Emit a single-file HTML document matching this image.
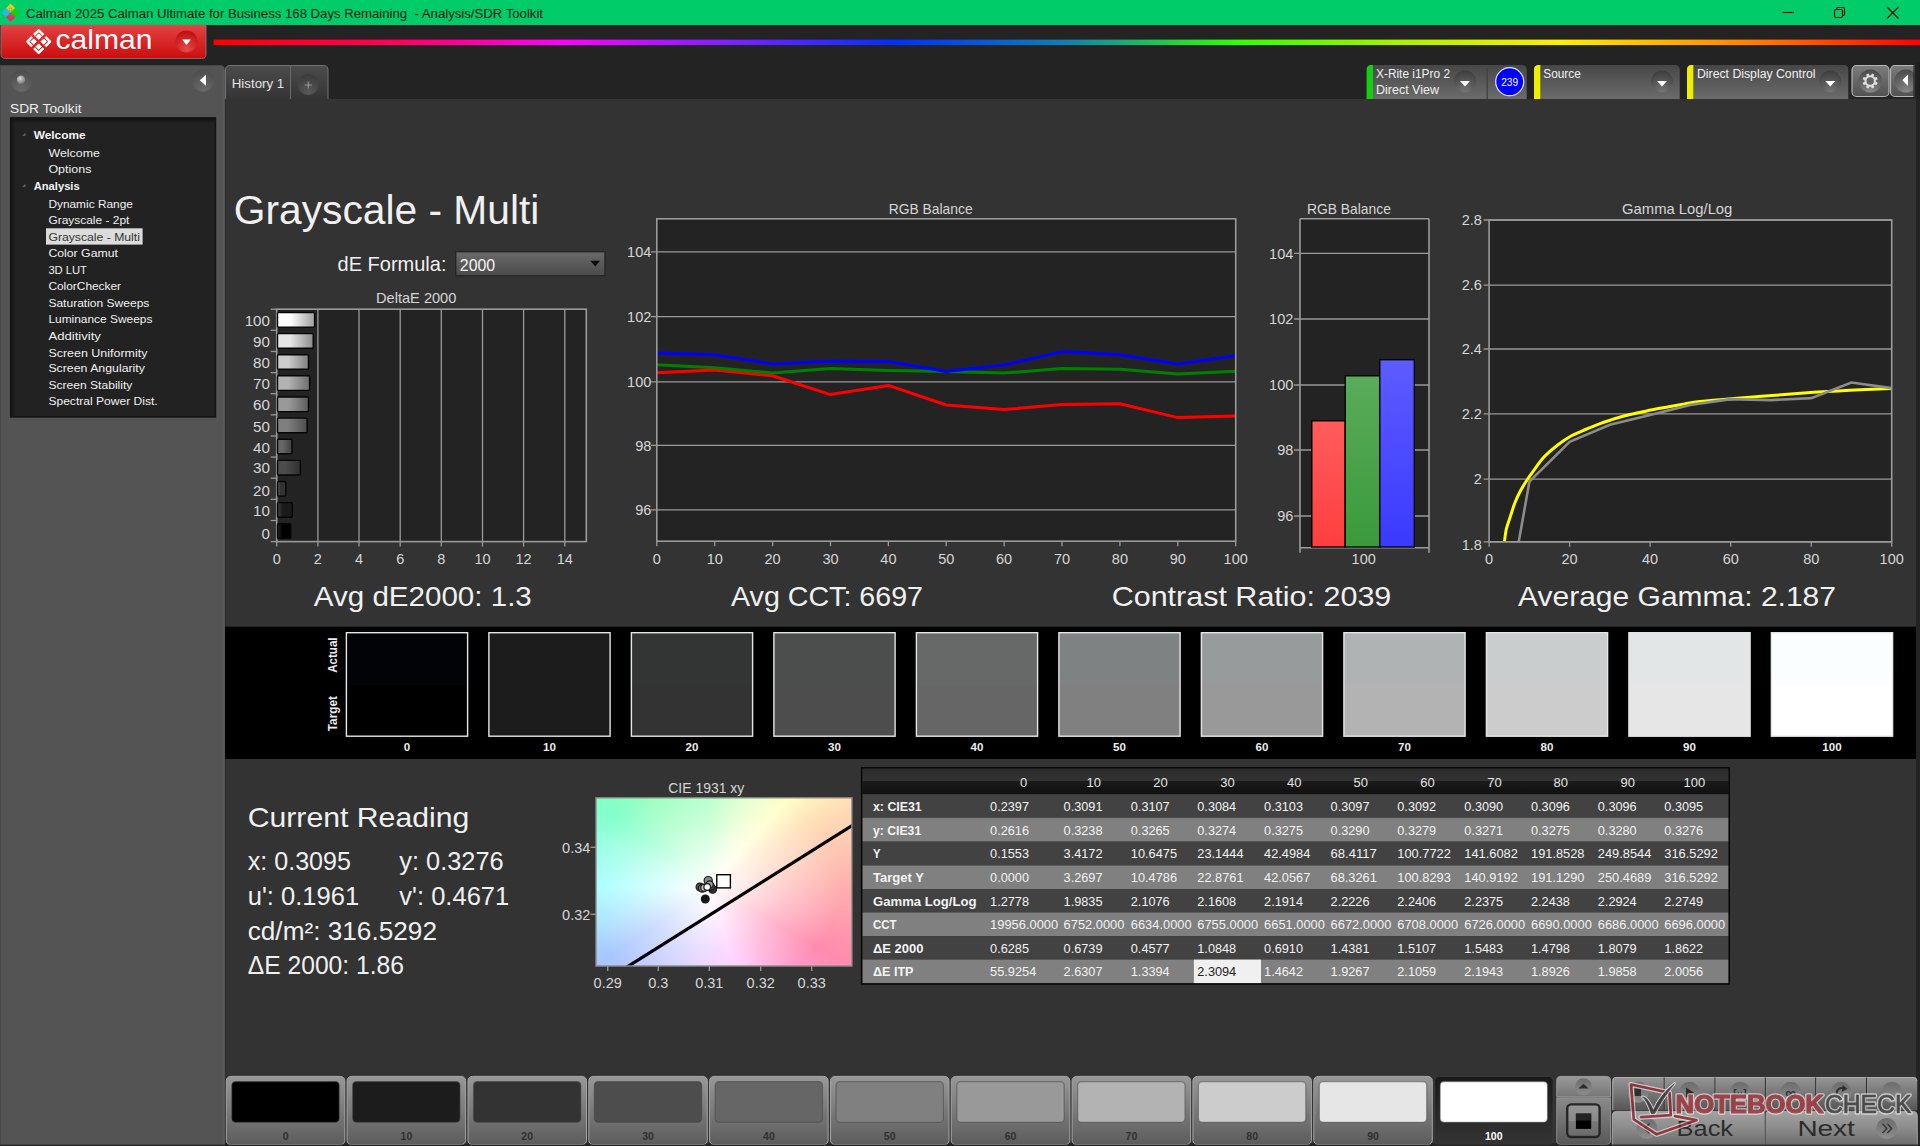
<!DOCTYPE html>
<html lang="en"><head><meta charset="utf-8"><title>Calman 2025 - Analysis/SDR Toolkit</title>
<style>
html,body{margin:0;padding:0;background:#333;width:1920px;height:1146px;overflow:hidden;font-family:"Liberation Sans",sans-serif}
#cie{position:absolute;left:596.0px;top:797.8px;width:255.9px;height:168.2px;background:radial-gradient(ellipse 52% 62% at 44% 53%, rgba(255,255,255,1) 0%, rgba(255,255,255,0.8) 22%, rgba(255,255,255,0.42) 60%, rgba(255,255,255,0.08) 100%),conic-gradient(from 0deg at 44% 53%, #a8ffc0 0deg, #e4ffc8 25deg, #ffffc4 42deg, #ffdcb0 58deg, #ffa8a8 90deg, #ff80a8 119deg, #ff98cc 137deg, #ffc0ff 161deg, #dcc8ff 188deg, #a0c0ff 235deg, #98ffff 270deg, #78ffc4 308deg, #90ffb8 328deg, #a8ffc0 360deg);}
svg text{white-space:pre}
</style></head><body>
<svg width="1920" height="1146" viewBox="0 0 1920 1146" font-family="'Liberation Sans', sans-serif" style="position:absolute;left:0;top:0"><defs><linearGradient id="gRed" x1="0" y1="0" x2="0" y2="1"><stop offset="0" stop-color="#e24444"/><stop offset="0.5" stop-color="#d82626"/><stop offset="1" stop-color="#c90f0f"/></linearGradient><radialGradient id="gRedBtn" cx="0.5" cy="0.85" r="0.8"><stop offset="0" stop-color="#e84a4a"/><stop offset="1" stop-color="#c01010"/></radialGradient><linearGradient id="gRain" x1="0" y1="0" x2="1" y2="0"><stop offset="0" stop-color="#ff0000"/><stop offset="0.11" stop-color="#ff0060"/><stop offset="0.205" stop-color="#ff00ff"/><stop offset="0.3" stop-color="#8020ff"/><stop offset="0.4" stop-color="#0030ff"/><stop offset="0.5" stop-color="#1080b0"/><stop offset="0.6" stop-color="#30ff00"/><stop offset="0.7" stop-color="#b0f000"/><stop offset="0.79" stop-color="#ffee00"/><stop offset="0.9" stop-color="#ff8000"/><stop offset="1" stop-color="#ff0000"/></linearGradient><linearGradient id="gTab" x1="0" y1="0" x2="0" y2="1"><stop offset="0" stop-color="#4c4c4c"/><stop offset="1" stop-color="#343434"/></linearGradient><radialGradient id="gDk" cx="0.5" cy="0.9" r="0.9"><stop offset="0" stop-color="#5a5a5a"/><stop offset="1" stop-color="#3a3a3a"/></radialGradient><linearGradient id="gPanel" x1="0" y1="0" x2="0" y2="1"><stop offset="0" stop-color="#474747"/><stop offset="1" stop-color="#6b6b6b"/></linearGradient><radialGradient id="gDrop" cx="0.5" cy="1.0" r="1.0"><stop offset="0" stop-color="#777"/><stop offset="1" stop-color="#3c3c3c"/></radialGradient><linearGradient id="gBtn" x1="0" y1="0" x2="0" y2="1"><stop offset="0" stop-color="#7c7c7c"/><stop offset="1" stop-color="#525252"/></linearGradient><radialGradient id="gDrop2" cx="0.5" cy="1.0" r="1.0"><stop offset="0" stop-color="#8a8a8a"/><stop offset="1" stop-color="#4a4a4a"/></radialGradient><linearGradient id="gEdge" x1="0" y1="0" x2="1" y2="0"><stop offset="0" stop-color="#232323"/><stop offset="1" stop-color="#1c1c1c"/></linearGradient><radialGradient id="gLp" cx="0.5" cy="0.9" r="0.9"><stop offset="0" stop-color="#6a6a6a"/><stop offset="1" stop-color="#4c4c4c"/></radialGradient><radialGradient id="gBall" cx="0.4" cy="0.35" r="0.7"><stop offset="0" stop-color="#d8d8d8"/><stop offset="1" stop-color="#707070"/></radialGradient><linearGradient id="gInS" x1="0" y1="0" x2="0" y2="1"><stop offset="0" stop-color="#0e0e0e"/><stop offset="1" stop-color="#222222"/></linearGradient><linearGradient id="gInS2" x1="0" y1="0" x2="1" y2="0"><stop offset="0" stop-color="#0e0e0e"/><stop offset="1" stop-color="#222222"/></linearGradient><linearGradient id="gSel" x1="0" y1="0" x2="0" y2="1"><stop offset="0" stop-color="#6a6a6a"/><stop offset="1" stop-color="#4a4a4a"/></linearGradient><linearGradient id="gB0" x1="0" y1="0" x2="1" y2="0"><stop offset="0" stop-color="rgb(38,38,38)"/><stop offset="0.35" stop-color="rgb(0,0,0)"/><stop offset="1" stop-color="rgb(0,0,0)"/></linearGradient><linearGradient id="gB10" x1="0" y1="0" x2="1" y2="0"><stop offset="0" stop-color="rgb(64,64,64)"/><stop offset="0.35" stop-color="rgb(26,26,26)"/><stop offset="1" stop-color="rgb(26,26,26)"/></linearGradient><linearGradient id="gB20" x1="0" y1="0" x2="1" y2="0"><stop offset="0" stop-color="rgb(89,89,89)"/><stop offset="0.35" stop-color="rgb(51,51,51)"/><stop offset="1" stop-color="rgb(51,51,51)"/></linearGradient><linearGradient id="gB30" x1="0" y1="0" x2="1" y2="0"><stop offset="0" stop-color="rgb(76,76,76)"/><stop offset="0.35" stop-color="rgb(76,76,76)"/><stop offset="1" stop-color="rgb(47,47,47)"/></linearGradient><linearGradient id="gB40" x1="0" y1="0" x2="1" y2="0"><stop offset="0" stop-color="rgb(102,102,102)"/><stop offset="0.35" stop-color="rgb(102,102,102)"/><stop offset="1" stop-color="rgb(63,63,63)"/></linearGradient><linearGradient id="gB50" x1="0" y1="0" x2="1" y2="0"><stop offset="0" stop-color="rgb(127,127,127)"/><stop offset="0.35" stop-color="rgb(127,127,127)"/><stop offset="1" stop-color="rgb(78,78,78)"/></linearGradient><linearGradient id="gB60" x1="0" y1="0" x2="1" y2="0"><stop offset="0" stop-color="rgb(153,153,153)"/><stop offset="0.35" stop-color="rgb(153,153,153)"/><stop offset="1" stop-color="rgb(94,94,94)"/></linearGradient><linearGradient id="gB70" x1="0" y1="0" x2="1" y2="0"><stop offset="0" stop-color="rgb(178,178,178)"/><stop offset="0.35" stop-color="rgb(178,178,178)"/><stop offset="1" stop-color="rgb(110,110,110)"/></linearGradient><linearGradient id="gB80" x1="0" y1="0" x2="1" y2="0"><stop offset="0" stop-color="rgb(204,204,204)"/><stop offset="0.35" stop-color="rgb(204,204,204)"/><stop offset="1" stop-color="rgb(126,126,126)"/></linearGradient><linearGradient id="gB90" x1="0" y1="0" x2="1" y2="0"><stop offset="0" stop-color="rgb(229,229,229)"/><stop offset="0.35" stop-color="rgb(229,229,229)"/><stop offset="1" stop-color="rgb(141,141,141)"/></linearGradient><linearGradient id="gB100" x1="0" y1="0" x2="1" y2="0"><stop offset="0" stop-color="rgb(255,255,255)"/><stop offset="0.35" stop-color="rgb(255,255,255)"/><stop offset="1" stop-color="rgb(158,158,158)"/></linearGradient><linearGradient id="gbR" x1="0" y1="0" x2="0" y2="1"><stop offset="0" stop-color="#ff5c5c"/><stop offset="1" stop-color="#ff3e3e"/></linearGradient><linearGradient id="gbG" x1="0" y1="0" x2="0" y2="1"><stop offset="0" stop-color="#5aac5a"/><stop offset="1" stop-color="#3a9a3a"/></linearGradient><linearGradient id="gbB" x1="0" y1="0" x2="0" y2="1"><stop offset="0" stop-color="#5c5cff"/><stop offset="1" stop-color="#3a3aff"/></linearGradient><linearGradient id="gHdr" x1="0" y1="0" x2="0" y2="1"><stop offset="0" stop-color="#2c2c2c"/><stop offset="0.47" stop-color="#323232"/><stop offset="0.5" stop-color="#1b1b1b"/><stop offset="1" stop-color="#101010"/></linearGradient><linearGradient id="gBb" x1="0" y1="0" x2="0" y2="1"><stop offset="0" stop-color="#989898"/><stop offset="0.5" stop-color="#7a7a7a"/><stop offset="1" stop-color="#5c5c5c"/></linearGradient><linearGradient id="gBbSel" x1="0" y1="0" x2="0" y2="1"><stop offset="0" stop-color="#1a1a1a"/><stop offset="1" stop-color="#343434"/></linearGradient><linearGradient id="gSm" x1="0" y1="0" x2="0" y2="1"><stop offset="0" stop-color="#9a9a9a"/><stop offset="1" stop-color="#767676"/></linearGradient><linearGradient id="gSm2" x1="0" y1="0" x2="0" y2="1"><stop offset="0" stop-color="#8a8a8a"/><stop offset="1" stop-color="#585858"/></linearGradient><linearGradient id="gStop" x1="0" y1="0" x2="0" y2="1"><stop offset="0" stop-color="#969696"/><stop offset="0.5" stop-color="#8a8a8a"/><stop offset="0.52" stop-color="#7a7a7a"/><stop offset="1" stop-color="#6a6a6a"/></linearGradient><linearGradient id="gRb" x1="0" y1="0" x2="0" y2="1"><stop offset="0" stop-color="#969696"/><stop offset="1" stop-color="#565656"/></linearGradient><linearGradient id="gCirc" x1="0" y1="0" x2="0" y2="1"><stop offset="0" stop-color="#6c6c6c"/><stop offset="1" stop-color="#8e8e8e"/></linearGradient><linearGradient id="gRb2" x1="0" y1="0" x2="0" y2="1"><stop offset="0" stop-color="#a2a2a2"/><stop offset="0.5" stop-color="#8a8a8a"/><stop offset="1" stop-color="#686868"/></linearGradient><filter id="fGlow" x="-5%" y="-20%" width="110%" height="150%"><feGaussianBlur stdDeviation="0.7"/></filter></defs>
<rect x="0.00" y="0.00" width="1920.00" height="1146.00" fill="#333333"/>
<rect x="0.00" y="25.00" width="1920.00" height="74.00" fill="#232323"/>
<rect x="1916.00" y="99.00" width="4.00" height="1047.00" fill="#232323"/>
<rect x="0.00" y="0.00" width="1920.00" height="25.00" fill="#00cc6a"/>
<path d="M10.6 3.5999999999999996L15.2 8.2L10.6 12.799999999999999L6.0 8.2Z" fill="#f6c915"/>
<path d="M6.1 8.1L10.7 12.7L6.1 17.299999999999997L1.5 12.7Z" fill="#2db4f0"/>
<path d="M15.1 8.1L19.7 12.7L15.1 17.299999999999997L10.5 12.7Z" fill="#10d010"/>
<path d="M10.6 12.6L15.2 17.2L10.6 21.799999999999997L6.0 17.2Z" fill="#f02860"/>
<circle cx="10.6" cy="9.4" r="1.5" fill="#f6c915" stroke="#00cc6a" stroke-width="0.7"/>
<circle cx="10.6" cy="15.6" r="1.5" fill="#f02860" stroke="#00cc6a" stroke-width="0.5"/>
<text x="26.0" y="18.3" font-size="13.6" fill="#0b1a10" textLength="517.0" lengthAdjust="spacingAndGlyphs">Calman 2025 Calman Ultimate for Business 168 Days Remaining  - Analysis/SDR Toolkit</text>
<g stroke="#111" stroke-width="1.1" fill="none"><path d="M1782.5 12.5H1794"/><rect x="1834.5" y="9.5" width="8" height="8" rx="1.5"/><path d="M1836.5 9.5V8.5Q1836.5 7.5 1838 7.5H1843Q1844.5 7.5 1844.5 9V14Q1844.5 15.5 1843 15.5"/><path d="M1887 7L1898.5 18.5M1898.5 7L1887 18.5"/></g>
<path d="M1 25H206V54Q206 58.5 201.5 58.5H5.5Q1 58.5 1 54Z" fill="url(#gRed)" stroke="#8a7070" stroke-width="0.9"/>
<g transform="translate(38.7,41.6)" fill="none" stroke="#fff" stroke-width="2.5" stroke-linecap="butt" stroke-linejoin="round"><path d="M-4.7 -6.6L0 -11.3L4.7 -6.6"/><path d="M-4.7 6.6L0 11.3L4.7 6.6"/><path d="M-6.6 -4.7L-11.3 0L-6.6 4.7"/><path d="M6.6 -4.7L11.3 0L6.6 4.7"/></g>
<path d="M38.7 33.9L41.400000000000006 36.6L38.7 39.300000000000004L36.0 36.6Z" fill="#fff" stroke="#fff" stroke-width="1" stroke-linejoin="round"/>
<path d="M38.7 43.9L41.400000000000006 46.6L38.7 49.300000000000004L36.0 46.6Z" fill="#fff" stroke="#fff" stroke-width="1" stroke-linejoin="round"/>
<path d="M33.7 38.9L36.400000000000006 41.6L33.7 44.300000000000004L31.000000000000004 41.6Z" fill="#fff" stroke="#fff" stroke-width="1" stroke-linejoin="round"/>
<path d="M43.7 38.9L46.400000000000006 41.6L43.7 44.300000000000004L41.0 41.6Z" fill="#fff" stroke="#fff" stroke-width="1" stroke-linejoin="round"/>
<text x="55.5" y="48.5" font-size="28" fill="#ffffff" textLength="97.0" lengthAdjust="spacingAndGlyphs">calman</text>
<circle cx="186.5" cy="41.5" r="11" fill="url(#gRedBtn)"/>
<path d="M182 39.5H191L186.5 45Z" fill="#fff"/>
<rect x="213.60" y="39.60" width="1706.40" height="5.50" fill="url(#gRain)"/>
<path d="M225.5 99V70Q225.5 65.5 230 65.5H323.5Q328 65.5 328 70V99Z" fill="url(#gTab)"/>
<path d="M225.5 99V70Q225.5 65.5 230 65.5H323.5Q328 65.5 328 70V99" fill="none" stroke="#707070" stroke-width="1"/>
<path d="M290.5 66V99" stroke="#6a6a6a" stroke-width="1"/>
<text x="231.7" y="88.3" font-size="13.6" fill="#e4e4e4" textLength="52.6" lengthAdjust="spacingAndGlyphs">History 1</text>
<circle cx="308.3" cy="84.5" r="10.5" fill="url(#gDk)"/>
<path d="M304.8 85H311.8M308.3 81.5V88.5" stroke="#9a9a9a" stroke-width="1"/>
<path d="M1366.7 99V69.5Q1366.7 65 1371.2 65H1522.2Q1526.7 65 1526.7 69.5V99Z" fill="url(#gPanel)"/>
<path d="M1366.7 99V69.5Q1366.7 65 1371.2 65H1373.0V99Z" fill="#10d010"/>
<text x="1376.0" y="77.6" font-size="12.3" fill="#f0f0f0" textLength="74.0" lengthAdjust="spacingAndGlyphs">X-Rite i1Pro 2</text>
<text x="1376.0" y="94.0" font-size="12.3" fill="#f0f0f0" textLength="63.0" lengthAdjust="spacingAndGlyphs">Direct View</text>
<circle cx="1465" cy="81.5" r="11" fill="url(#gDrop)"/>
<path d="M1460 81.0H1470L1465 86.5Z" fill="#fff"/>
<path d="M1487.2 68V99" stroke="#3e3e3e" stroke-width="1.2"/>
<circle cx="1509.7" cy="81.7" r="14" fill="#0000ff" stroke="#e0e0ff" stroke-width="1.2"/>
<text x="1509.7" y="85.6" font-size="10.8" fill="#ffffff" textLength="17.0" lengthAdjust="spacingAndGlyphs" text-anchor="middle">239</text>
<path d="M1534 99V69.5Q1534 65 1538.5 65H1675.2Q1679.7 65 1679.7 69.5V99Z" fill="url(#gPanel)"/>
<path d="M1534 99V69.5Q1534 65 1538.5 65H1540.3V99Z" fill="#eeee00"/>
<text x="1543.3" y="77.6" font-size="12.3" fill="#f0f0f0" textLength="37.5" lengthAdjust="spacingAndGlyphs">Source</text>
<circle cx="1662" cy="81.5" r="11" fill="url(#gDrop)"/>
<path d="M1657 81.0H1667L1662 86.5Z" fill="#fff"/>
<path d="M1687 99V69.5Q1687 65 1691.5 65H1843.8Q1848.3 65 1848.3 69.5V99Z" fill="url(#gPanel)"/>
<path d="M1687 99V69.5Q1687 65 1691.5 65H1693.3V99Z" fill="#eeee00"/>
<text x="1697.0" y="77.6" font-size="12.3" fill="#f0f0f0" textLength="118.5" lengthAdjust="spacingAndGlyphs">Direct Display Control</text>
<circle cx="1830.3" cy="81.5" r="11" fill="url(#gDrop)"/>
<path d="M1825.3 81.0H1835.3L1830.3 86.5Z" fill="#fff"/>
<rect x="1852" y="65.5" width="37" height="31" rx="4.5" fill="url(#gBtn)" stroke="#b4b4b4" stroke-width="1.2"/>
<rect x="1890.5" y="65.5" width="37" height="31" rx="4.5" fill="url(#gBtn)" stroke="#b4b4b4" stroke-width="1.2"/>
<circle cx="1870.3" cy="81" r="11.5" fill="url(#gDrop2)"/>
<circle cx="1906" cy="81" r="11.5" fill="url(#gDrop2)"/>
<path d="M1875.84 81.81L1877.67 82.85L1876.79 84.98L1874.76 84.42L1873.62 85.56L1874.18 87.59L1872.05 88.47L1871.01 86.64L1869.39 86.64L1868.35 88.47L1866.22 87.59L1866.78 85.56L1865.64 84.42L1863.61 84.98L1862.73 82.85L1864.56 81.81L1864.56 80.19L1862.73 79.15L1863.61 77.02L1865.64 77.58L1866.78 76.44L1866.22 74.41L1868.35 73.53L1869.39 75.36L1871.01 75.36L1872.05 73.53L1874.18 74.41L1873.62 76.44L1874.76 77.58L1876.79 77.02L1877.67 79.15L1875.84 80.19Z" fill="#dedede"/>
<circle cx="1870.2" cy="81" r="3.7" fill="#646464"/>
<path d="M1908 74.5V86L1902.3 80.2Z" fill="#fff"/>
<rect x="1914.50" y="62.00" width="5.50" height="37.00" fill="url(#gEdge)"/>
<rect x="1913.00" y="62.00" width="2.00" height="37.00" fill="#232323" opacity="0.5"/>
<path d="M0 1146V65.3H220.4Q224.9 65.3 224.9 69.8V1146Z" fill="#545454"/>
<path d="M223.7 70V1146" stroke="#5a5a5a" stroke-width="1.6"/>
<path d="M225.5 100V1146" stroke="#2a2a2a" stroke-width="1"/>
<path d="M0.5 65V1146" stroke="#4a4a4a" stroke-width="1"/>
<circle cx="21.3" cy="80.7" r="11" fill="url(#gLp)"/>
<circle cx="21" cy="79.8" r="4.2" fill="url(#gBall)"/>
<circle cx="203.3" cy="80.7" r="11" fill="url(#gLp)"/>
<path d="M206 74.8V85.8L199.8 80.3Z" fill="#fff"/>
<text x="10.0" y="113.2" font-size="13.6" fill="#ececec" textLength="71.5" lengthAdjust="spacingAndGlyphs">SDR Toolkit</text>
<rect x="10.70" y="117.90" width="204.70" height="299.00" fill="#222222" stroke="#141414" stroke-width="1.6"/>
<rect x="11.50" y="118.70" width="203.10" height="5.00" fill="url(#gInS)" opacity="0.75"/>
<rect x="11.50" y="118.70" width="4.00" height="297.40" fill="url(#gInS2)" opacity="0.6"/>
<path d="M25.5 132.60000000000002V136.0H22.1Z" fill="#5c5c5c"/>
<text x="33.7" y="139.0" font-size="11.8" fill="#f4f4f4" textLength="52.0" lengthAdjust="spacingAndGlyphs" font-weight="bold">Welcome</text>
<text x="48.4" y="156.9" font-size="11.8" fill="#f0f0f0" textLength="51.5" lengthAdjust="spacingAndGlyphs">Welcome</text>
<text x="48.4" y="173.2" font-size="11.8" fill="#f0f0f0" textLength="43.0" lengthAdjust="spacingAndGlyphs">Options</text>
<path d="M25.5 183.60000000000002V187.0H22.1Z" fill="#5c5c5c"/>
<text x="33.7" y="190.0" font-size="11.8" fill="#f4f4f4" textLength="46.0" lengthAdjust="spacingAndGlyphs" font-weight="bold">Analysis</text>
<text x="48.4" y="207.9" font-size="11.8" fill="#f0f0f0" textLength="84.5" lengthAdjust="spacingAndGlyphs">Dynamic Range</text>
<text x="48.4" y="224.2" font-size="11.8" fill="#f0f0f0" textLength="81.0" lengthAdjust="spacingAndGlyphs">Grayscale - 2pt</text>
<rect x="46.00" y="228.30" width="96.60" height="16.30" fill="#dcdcdc"/>
<text x="48.4" y="240.7" font-size="11.8" fill="#333" textLength="91.5" lengthAdjust="spacingAndGlyphs">Grayscale - Multi</text>
<text x="48.4" y="257.2" font-size="11.8" fill="#f0f0f0" textLength="69.5" lengthAdjust="spacingAndGlyphs">Color Gamut</text>
<text x="48.4" y="273.6" font-size="11.8" fill="#f0f0f0" textLength="38.5" lengthAdjust="spacingAndGlyphs">3D LUT</text>
<text x="48.4" y="290.2" font-size="11.8" fill="#f0f0f0" textLength="72.7" lengthAdjust="spacingAndGlyphs">ColorChecker</text>
<text x="48.4" y="307.0" font-size="11.8" fill="#f0f0f0" textLength="101.0" lengthAdjust="spacingAndGlyphs">Saturation Sweeps</text>
<text x="48.4" y="323.4" font-size="11.8" fill="#f0f0f0" textLength="104.0" lengthAdjust="spacingAndGlyphs">Luminance Sweeps</text>
<text x="48.4" y="339.8" font-size="11.8" fill="#f0f0f0" textLength="52.5" lengthAdjust="spacingAndGlyphs">Additivity</text>
<text x="48.4" y="356.5" font-size="11.8" fill="#f0f0f0" textLength="99.0" lengthAdjust="spacingAndGlyphs">Screen Uniformity</text>
<text x="48.4" y="372.4" font-size="11.8" fill="#f0f0f0" textLength="96.5" lengthAdjust="spacingAndGlyphs">Screen Angularity</text>
<text x="48.4" y="388.8" font-size="11.8" fill="#f0f0f0" textLength="84.0" lengthAdjust="spacingAndGlyphs">Screen Stability</text>
<text x="48.4" y="405.2" font-size="11.8" fill="#f0f0f0" textLength="109.3" lengthAdjust="spacingAndGlyphs">Spectral Power Dist.</text>
<text x="233.8" y="223.7" font-size="40" fill="#f0f0f0" textLength="305.5" lengthAdjust="spacingAndGlyphs">Grayscale - Multi</text>
<text x="337.5" y="270.6" font-size="20.4" fill="#f0f0f0" textLength="109.0" lengthAdjust="spacingAndGlyphs">dE Formula:</text>
<rect x="455.70" y="251.70" width="149.30" height="24.00" fill="url(#gSel)" stroke="#262626" stroke-width="1.4"/>
<text x="459.8" y="271.0" font-size="15.6" fill="#f4f4f4" textLength="35.4" lengthAdjust="spacingAndGlyphs">2000</text>
<path d="M590.4 260.8H600L595.2 266.6Z" fill="#0a0a0a"/>
<text x="416.2" y="303.3" font-size="14.6" fill="#d6d6d6" textLength="80.3" lengthAdjust="spacingAndGlyphs" text-anchor="middle">DeltaE 2000</text>
<rect x="276.70" y="309.20" width="309.60" height="232.40" fill="#232323"/>
<path d="M317.9 309.2V546.6" stroke="#9a9a9a" stroke-width="1.3"/>
<path d="M359.0 309.2V546.6" stroke="#9a9a9a" stroke-width="1.3"/>
<path d="M400.2 309.2V546.6" stroke="#9a9a9a" stroke-width="1.3"/>
<path d="M441.3 309.2V546.6" stroke="#9a9a9a" stroke-width="1.3"/>
<path d="M482.5 309.2V546.6" stroke="#9a9a9a" stroke-width="1.3"/>
<path d="M523.6 309.2V546.6" stroke="#9a9a9a" stroke-width="1.3"/>
<path d="M564.8 309.2V546.6" stroke="#9a9a9a" stroke-width="1.3"/>
<path d="M276.7 546.6V541.6" stroke="#9a9a9a" stroke-width="1.3"/>
<rect x="276.7" y="309.2" width="309.6" height="232.4" fill="none" stroke="#9a9a9a" stroke-width="1.6"/>
<path d="M270.7 309.2H276.7" stroke="#9a9a9a" stroke-width="1.3"/>
<path d="M270.7 330.3H276.7" stroke="#9a9a9a" stroke-width="1.3"/>
<path d="M270.7 351.5H276.7" stroke="#9a9a9a" stroke-width="1.3"/>
<path d="M270.7 372.6H276.7" stroke="#9a9a9a" stroke-width="1.3"/>
<path d="M270.7 393.7H276.7" stroke="#9a9a9a" stroke-width="1.3"/>
<path d="M270.7 414.8H276.7" stroke="#9a9a9a" stroke-width="1.3"/>
<path d="M270.7 436.0H276.7" stroke="#9a9a9a" stroke-width="1.3"/>
<path d="M270.7 457.1H276.7" stroke="#9a9a9a" stroke-width="1.3"/>
<path d="M270.7 478.2H276.7" stroke="#9a9a9a" stroke-width="1.3"/>
<path d="M270.7 499.3H276.7" stroke="#9a9a9a" stroke-width="1.3"/>
<path d="M270.7 520.5H276.7" stroke="#9a9a9a" stroke-width="1.3"/>
<path d="M270.7 541.6H276.7" stroke="#9a9a9a" stroke-width="1.3"/>
<rect x="277.5" y="523.7" width="13.3" height="14.6" rx="1" fill="url(#gB0)" stroke="#060606" stroke-width="1.4"/>
<text x="270.0" y="538.6" font-size="15.2" fill="#d6d6d6" text-anchor="end">0</text>
<rect x="277.5" y="502.6" width="14.8" height="14.6" rx="1" fill="url(#gB10)" stroke="#060606" stroke-width="1.4"/>
<text x="270.0" y="516.3" font-size="15.2" fill="#d6d6d6" text-anchor="end">10</text>
<rect x="277.5" y="481.5" width="8.3" height="14.6" rx="1" fill="url(#gB20)" stroke="#060606" stroke-width="1.4"/>
<text x="270.0" y="496.2" font-size="15.2" fill="#d6d6d6" text-anchor="end">20</text>
<rect x="277.5" y="460.4" width="22.9" height="14.6" rx="1" fill="url(#gB30)" stroke="#060606" stroke-width="1.4"/>
<text x="270.0" y="473.3" font-size="15.2" fill="#d6d6d6" text-anchor="end">30</text>
<rect x="277.5" y="439.2" width="14.5" height="14.6" rx="1" fill="url(#gB40)" stroke="#060606" stroke-width="1.4"/>
<text x="270.0" y="452.9" font-size="15.2" fill="#d6d6d6" text-anchor="end">40</text>
<rect x="277.5" y="418.1" width="29.6" height="14.6" rx="1" fill="url(#gB50)" stroke="#060606" stroke-width="1.4"/>
<text x="270.0" y="431.9" font-size="15.2" fill="#d6d6d6" text-anchor="end">50</text>
<rect x="277.5" y="397.0" width="31.0" height="14.6" rx="1" fill="url(#gB60)" stroke="#060606" stroke-width="1.4"/>
<text x="270.0" y="409.6" font-size="15.2" fill="#d6d6d6" text-anchor="end">60</text>
<rect x="277.5" y="375.8" width="32.1" height="14.6" rx="1" fill="url(#gB70)" stroke="#060606" stroke-width="1.4"/>
<text x="270.0" y="389.2" font-size="15.2" fill="#d6d6d6" text-anchor="end">70</text>
<rect x="277.5" y="354.7" width="31.0" height="14.6" rx="1" fill="url(#gB80)" stroke="#060606" stroke-width="1.4"/>
<text x="270.0" y="368.2" font-size="15.2" fill="#d6d6d6" text-anchor="end">80</text>
<rect x="277.5" y="333.6" width="35.7" height="14.6" rx="1" fill="url(#gB90)" stroke="#060606" stroke-width="1.4"/>
<text x="270.0" y="346.7" font-size="15.2" fill="#d6d6d6" text-anchor="end">90</text>
<rect x="277.5" y="312.5" width="37.1" height="14.6" rx="1" fill="url(#gB100)" stroke="#060606" stroke-width="1.4"/>
<text x="270.0" y="325.8" font-size="15.2" fill="#d6d6d6" text-anchor="end">100</text>
<text x="276.7" y="564.0" font-size="14.5" fill="#d6d6d6" text-anchor="middle">0</text>
<text x="317.9" y="564.0" font-size="14.5" fill="#d6d6d6" text-anchor="middle">2</text>
<text x="359.0" y="564.0" font-size="14.5" fill="#d6d6d6" text-anchor="middle">4</text>
<text x="400.2" y="564.0" font-size="14.5" fill="#d6d6d6" text-anchor="middle">6</text>
<text x="441.3" y="564.0" font-size="14.5" fill="#d6d6d6" text-anchor="middle">8</text>
<text x="482.5" y="564.0" font-size="14.5" fill="#d6d6d6" text-anchor="middle">10</text>
<text x="523.6" y="564.0" font-size="14.5" fill="#d6d6d6" text-anchor="middle">12</text>
<text x="564.8" y="564.0" font-size="14.5" fill="#d6d6d6" text-anchor="middle">14</text>
<text x="930.7" y="213.8" font-size="14.6" fill="#d6d6d6" textLength="84.0" lengthAdjust="spacingAndGlyphs" text-anchor="middle">RGB Balance</text>
<rect x="656.80" y="218.80" width="578.90" height="322.40" fill="#232323"/>
<path d="M650.8 251.8H1235.7" stroke="#9a9a9a" stroke-width="1.3"/>
<text x="651.3" y="257.0" font-size="14.5" fill="#d6d6d6" text-anchor="end">104</text>
<path d="M650.8 316.7H1235.7" stroke="#9a9a9a" stroke-width="1.3"/>
<text x="651.3" y="321.9" font-size="14.5" fill="#d6d6d6" text-anchor="end">102</text>
<path d="M650.8 381.9H1235.7" stroke="#9a9a9a" stroke-width="1.3"/>
<text x="651.3" y="387.1" font-size="14.5" fill="#d6d6d6" text-anchor="end">100</text>
<path d="M650.8 445.3H1235.7" stroke="#9a9a9a" stroke-width="1.3"/>
<text x="651.3" y="450.5" font-size="14.5" fill="#d6d6d6" text-anchor="end">98</text>
<path d="M650.8 509.8H1235.7" stroke="#9a9a9a" stroke-width="1.3"/>
<text x="651.3" y="515.0" font-size="14.5" fill="#d6d6d6" text-anchor="end">96</text>
<path d="M656.8 541.2V546.2" stroke="#9a9a9a" stroke-width="1.3"/>
<text x="656.8" y="563.6" font-size="14.5" fill="#d6d6d6" text-anchor="middle">0</text>
<path d="M714.7 541.2V546.2" stroke="#9a9a9a" stroke-width="1.3"/>
<text x="714.7" y="563.6" font-size="14.5" fill="#d6d6d6" text-anchor="middle">10</text>
<path d="M772.6 541.2V546.2" stroke="#9a9a9a" stroke-width="1.3"/>
<text x="772.6" y="563.6" font-size="14.5" fill="#d6d6d6" text-anchor="middle">20</text>
<path d="M830.5 541.2V546.2" stroke="#9a9a9a" stroke-width="1.3"/>
<text x="830.5" y="563.6" font-size="14.5" fill="#d6d6d6" text-anchor="middle">30</text>
<path d="M888.4 541.2V546.2" stroke="#9a9a9a" stroke-width="1.3"/>
<text x="888.4" y="563.6" font-size="14.5" fill="#d6d6d6" text-anchor="middle">40</text>
<path d="M946.2 541.2V546.2" stroke="#9a9a9a" stroke-width="1.3"/>
<text x="946.2" y="563.6" font-size="14.5" fill="#d6d6d6" text-anchor="middle">50</text>
<path d="M1004.1 541.2V546.2" stroke="#9a9a9a" stroke-width="1.3"/>
<text x="1004.1" y="563.6" font-size="14.5" fill="#d6d6d6" text-anchor="middle">60</text>
<path d="M1062.0 541.2V546.2" stroke="#9a9a9a" stroke-width="1.3"/>
<text x="1062.0" y="563.6" font-size="14.5" fill="#d6d6d6" text-anchor="middle">70</text>
<path d="M1119.9 541.2V546.2" stroke="#9a9a9a" stroke-width="1.3"/>
<text x="1119.9" y="563.6" font-size="14.5" fill="#d6d6d6" text-anchor="middle">80</text>
<path d="M1177.8 541.2V546.2" stroke="#9a9a9a" stroke-width="1.3"/>
<text x="1177.8" y="563.6" font-size="14.5" fill="#d6d6d6" text-anchor="middle">90</text>
<path d="M1235.7 541.2V546.2" stroke="#9a9a9a" stroke-width="1.3"/>
<text x="1235.7" y="563.6" font-size="14.5" fill="#d6d6d6" text-anchor="middle">100</text>
<clipPath id="cpR"><rect x="656.8" y="218.8" width="578.9" height="322.4"/></clipPath>
<path d="M656.8 372.7L714.7 370L772.6 375.8L830.5 394.6L888.4 385.4L946.2 405L1004.1 409.6L1062.0 404.6L1119.9 403.8L1177.8 417.6L1235.7 416.1" fill="none" stroke="#ff0000" stroke-width="3" stroke-linejoin="round" clip-path="url(#cpR)"/>
<path d="M656.8 364.7L714.7 367.7L772.6 373.1L830.5 368.5L888.4 370.4L946.2 371.6L1004.1 373.1L1062.0 368.5L1119.9 369.3L1177.8 373.9L1235.7 371.2" fill="none" stroke="#008000" stroke-width="3" stroke-linejoin="round" clip-path="url(#cpR)"/>
<path d="M656.8 353.1L714.7 354.7L772.6 363.9L830.5 361.2L888.4 361.6L946.2 371.6L1004.1 365L1062.0 351.6L1119.9 354.7L1177.8 363.9L1235.7 355.8" fill="none" stroke="#0000ff" stroke-width="3" stroke-linejoin="round" clip-path="url(#cpR)"/>
<rect x="656.8" y="218.8" width="578.9" height="322.4" fill="none" stroke="#9a9a9a" stroke-width="1.6"/>
<text x="1348.9" y="213.8" font-size="14.6" fill="#d6d6d6" textLength="84.0" lengthAdjust="spacingAndGlyphs" text-anchor="middle">RGB Balance</text>
<rect x="1300.00" y="218.80" width="129.00" height="329.00" fill="#232323"/>
<path d="M1294 253.4H1429" stroke="#9a9a9a" stroke-width="1.3"/>
<text x="1293.3" y="258.6" font-size="14.5" fill="#d6d6d6" text-anchor="end">104</text>
<path d="M1294 319H1429" stroke="#9a9a9a" stroke-width="1.3"/>
<text x="1293.3" y="324.2" font-size="14.5" fill="#d6d6d6" text-anchor="end">102</text>
<path d="M1294 385H1429" stroke="#9a9a9a" stroke-width="1.3"/>
<text x="1293.3" y="390.2" font-size="14.5" fill="#d6d6d6" text-anchor="end">100</text>
<path d="M1294 450H1429" stroke="#9a9a9a" stroke-width="1.3"/>
<text x="1293.3" y="455.2" font-size="14.5" fill="#d6d6d6" text-anchor="end">98</text>
<path d="M1294 516H1429" stroke="#9a9a9a" stroke-width="1.3"/>
<text x="1293.3" y="521.2" font-size="14.5" fill="#d6d6d6" text-anchor="end">96</text>
<path d="M1300 218.8V552.8M1429 218.8V552.8M1300 218.8H1429M1300 547.8H1429" fill="none" stroke="#9a9a9a" stroke-width="1.6"/>
<rect x="1311.8" y="420.8" width="33.4" height="126.2" fill="url(#gbR)" stroke="#050505" stroke-width="1.4"/>
<rect x="1345.2" y="375.8" width="34.6" height="171.2" fill="url(#gbG)" stroke="#050505" stroke-width="1.4"/>
<rect x="1379.8" y="359.7" width="34.5" height="187.3" fill="url(#gbB)" stroke="#050505" stroke-width="1.4"/>
<text x="1363.7" y="563.6" font-size="14.5" fill="#d6d6d6" text-anchor="middle">100</text>
<text x="1677.2" y="213.8" font-size="14.6" fill="#d6d6d6" textLength="110.3" lengthAdjust="spacingAndGlyphs" text-anchor="middle">Gamma Log/Log</text>
<rect x="1489.10" y="220.00" width="402.60" height="321.80" fill="#232323"/>
<path d="M1483.6 220.0H1891.7" stroke="#9a9a9a" stroke-width="1.3"/>
<text x="1481.8" y="225.2" font-size="14.5" fill="#d6d6d6" text-anchor="end">2.8</text>
<path d="M1483.6 285.2H1891.7" stroke="#9a9a9a" stroke-width="1.3"/>
<text x="1481.8" y="290.4" font-size="14.5" fill="#d6d6d6" text-anchor="end">2.6</text>
<path d="M1483.6 349.0H1891.7" stroke="#9a9a9a" stroke-width="1.3"/>
<text x="1481.8" y="354.2" font-size="14.5" fill="#d6d6d6" text-anchor="end">2.4</text>
<path d="M1483.6 413.8H1891.7" stroke="#9a9a9a" stroke-width="1.3"/>
<text x="1481.8" y="419.0" font-size="14.5" fill="#d6d6d6" text-anchor="end">2.2</text>
<path d="M1483.6 479.2H1891.7" stroke="#9a9a9a" stroke-width="1.3"/>
<text x="1481.8" y="484.4" font-size="14.5" fill="#d6d6d6" text-anchor="end">2</text>
<path d="M1483.6 541.8H1891.7" stroke="#9a9a9a" stroke-width="1.3"/>
<text x="1481.8" y="549.7" font-size="14.5" fill="#d6d6d6" text-anchor="end">1.8</text>
<path d="M1489.1 541.8V546.8" stroke="#9a9a9a" stroke-width="1.3"/>
<text x="1489.1" y="563.6" font-size="14.5" fill="#d6d6d6" text-anchor="middle">0</text>
<path d="M1569.6 541.8V546.8" stroke="#9a9a9a" stroke-width="1.3"/>
<text x="1569.6" y="563.6" font-size="14.5" fill="#d6d6d6" text-anchor="middle">20</text>
<path d="M1650.1 541.8V546.8" stroke="#9a9a9a" stroke-width="1.3"/>
<text x="1650.1" y="563.6" font-size="14.5" fill="#d6d6d6" text-anchor="middle">40</text>
<path d="M1730.7 541.8V546.8" stroke="#9a9a9a" stroke-width="1.3"/>
<text x="1730.7" y="563.6" font-size="14.5" fill="#d6d6d6" text-anchor="middle">60</text>
<path d="M1811.2 541.8V546.8" stroke="#9a9a9a" stroke-width="1.3"/>
<text x="1811.2" y="563.6" font-size="14.5" fill="#d6d6d6" text-anchor="middle">80</text>
<path d="M1891.7 541.8V546.8" stroke="#9a9a9a" stroke-width="1.3"/>
<text x="1891.7" y="563.6" font-size="14.5" fill="#d6d6d6" text-anchor="middle">100</text>
<clipPath id="cpG"><rect x="1489.1" y="220" width="402.6" height="321.8"/></clipPath>
<path d="M1503.2 548.0C1503.4 547.0 1503.9 544.9 1504.4 541.8C1504.9 538.7 1505.3 533.4 1506.3 529.2C1507.3 525.0 1508.8 521.1 1510.3 516.6C1511.8 512.1 1513.3 506.8 1515.0 502.5C1516.7 498.2 1518.5 494.4 1520.5 490.7C1522.5 487.0 1524.5 483.9 1526.7 480.5C1528.9 477.1 1530.9 474.2 1533.8 470.3C1536.7 466.4 1540.1 461.2 1544.0 457.0C1547.9 452.8 1552.8 448.7 1557.4 445.2C1562.0 441.7 1566.8 438.4 1571.5 435.8C1576.2 433.2 1581.1 431.4 1585.6 429.5C1590.0 427.6 1594.0 425.9 1598.2 424.3C1602.4 422.7 1606.3 421.4 1610.8 420.0C1615.2 418.6 1619.9 417.1 1624.9 415.8C1629.9 414.5 1635.6 413.3 1640.6 412.2C1645.6 411.1 1650.1 410.1 1654.8 409.2C1659.5 408.3 1663.9 407.6 1668.9 406.7C1673.9 405.8 1679.4 404.8 1684.6 403.9C1689.8 403.0 1691.7 402.4 1700.0 401.5C1708.3 400.6 1722.2 399.4 1734.2 398.4C1746.2 397.4 1759.3 396.5 1772.0 395.5C1784.7 394.5 1797.4 393.5 1810.4 392.6C1823.4 391.7 1836.5 391.0 1850.0 390.3C1863.5 389.6 1884.6 388.7 1891.5 388.4" fill="none" stroke="#ffff00" stroke-width="3" clip-path="url(#cpG)"/>
<path d="M1489.1 708.5L1529.4 481.7L1569.6 441.9L1609.9 424.8L1650.1 414.9L1690.4 404.9L1730.7 399.1L1770.9 400.1L1811.2 398.1L1851.4 382.5L1891.7 388.1" fill="none" stroke="#8c8c8c" stroke-width="2.6" stroke-linejoin="miter" clip-path="url(#cpG)"/>
<rect x="1489.1" y="220" width="402.6" height="321.8" fill="none" stroke="#9a9a9a" stroke-width="1.6"/>
<text x="313.8" y="606.2" font-size="28" fill="#f0f0f0" textLength="218.0" lengthAdjust="spacingAndGlyphs">Avg dE2000: 1.3</text>
<text x="731.0" y="606.2" font-size="28" fill="#f0f0f0" textLength="192.0" lengthAdjust="spacingAndGlyphs">Avg CCT: 6697</text>
<text x="1111.7" y="606.2" font-size="28" fill="#f0f0f0" textLength="279.6" lengthAdjust="spacingAndGlyphs">Contrast Ratio: 2039</text>
<text x="1518.0" y="606.2" font-size="28" fill="#f0f0f0" textLength="318.0" lengthAdjust="spacingAndGlyphs">Average Gamma: 2.187</text>
<rect x="225.00" y="626.70" width="1691.00" height="132.30" fill="#000000"/>
<rect x="346.40" y="632.70" width="121.20" height="103.50" fill="#000000"/>
<rect x="346.40" y="632.70" width="121.20" height="52.30" fill="#020306" shape-rendering="crispEdges"/>
<rect x="346.4" y="632.7" width="121.2" height="103.5" fill="none" stroke="#e6e6e6" stroke-width="1.4"/>
<text x="407.0" y="750.7" font-size="11.6" fill="#ececec" text-anchor="middle" font-weight="bold">0</text>
<rect x="488.90" y="632.70" width="121.20" height="103.50" fill="#1c1c1c"/>
<rect x="488.90" y="632.70" width="121.20" height="52.30" fill="#1c1c1d" shape-rendering="crispEdges"/>
<rect x="488.9" y="632.7" width="121.2" height="103.5" fill="none" stroke="#e6e6e6" stroke-width="1.4"/>
<text x="549.5" y="750.7" font-size="11.6" fill="#ececec" text-anchor="middle" font-weight="bold">10</text>
<rect x="631.40" y="632.70" width="121.20" height="103.50" fill="#333333"/>
<rect x="631.40" y="632.70" width="121.20" height="52.30" fill="#333434" shape-rendering="crispEdges"/>
<rect x="631.4" y="632.7" width="121.2" height="103.5" fill="none" stroke="#e6e6e6" stroke-width="1.4"/>
<text x="692.0" y="750.7" font-size="11.6" fill="#ececec" text-anchor="middle" font-weight="bold">20</text>
<rect x="773.90" y="632.70" width="121.20" height="103.50" fill="#4d4d4d"/>
<rect x="773.90" y="632.70" width="121.20" height="52.30" fill="#4c4d4d" shape-rendering="crispEdges"/>
<rect x="773.9" y="632.7" width="121.2" height="103.5" fill="none" stroke="#e6e6e6" stroke-width="1.4"/>
<text x="834.5" y="750.7" font-size="11.6" fill="#ececec" text-anchor="middle" font-weight="bold">30</text>
<rect x="916.40" y="632.70" width="121.20" height="103.50" fill="#666666"/>
<rect x="916.40" y="632.70" width="121.20" height="52.30" fill="#676969" shape-rendering="crispEdges"/>
<rect x="916.4" y="632.7" width="121.2" height="103.5" fill="none" stroke="#e6e6e6" stroke-width="1.4"/>
<text x="977.0" y="750.7" font-size="11.6" fill="#ececec" text-anchor="middle" font-weight="bold">40</text>
<rect x="1058.90" y="632.70" width="121.20" height="103.50" fill="#808080"/>
<rect x="1058.90" y="632.70" width="121.20" height="52.30" fill="#7f8283" shape-rendering="crispEdges"/>
<rect x="1058.9" y="632.7" width="121.2" height="103.5" fill="none" stroke="#e6e6e6" stroke-width="1.4"/>
<text x="1119.5" y="750.7" font-size="11.6" fill="#ececec" text-anchor="middle" font-weight="bold">50</text>
<rect x="1201.40" y="632.70" width="121.20" height="103.50" fill="#999999"/>
<rect x="1201.40" y="632.70" width="121.20" height="52.30" fill="#989b9c" shape-rendering="crispEdges"/>
<rect x="1201.4" y="632.7" width="121.2" height="103.5" fill="none" stroke="#e6e6e6" stroke-width="1.4"/>
<text x="1262.0" y="750.7" font-size="11.6" fill="#ececec" text-anchor="middle" font-weight="bold">60</text>
<rect x="1343.90" y="632.70" width="121.20" height="103.50" fill="#b3b3b3"/>
<rect x="1343.90" y="632.70" width="121.20" height="52.30" fill="#b0b3b4" shape-rendering="crispEdges"/>
<rect x="1343.9" y="632.7" width="121.2" height="103.5" fill="none" stroke="#e6e6e6" stroke-width="1.4"/>
<text x="1404.5" y="750.7" font-size="11.6" fill="#ececec" text-anchor="middle" font-weight="bold">70</text>
<rect x="1486.40" y="632.70" width="121.20" height="103.50" fill="#cccccc"/>
<rect x="1486.40" y="632.70" width="121.20" height="52.30" fill="#cacdce" shape-rendering="crispEdges"/>
<rect x="1486.4" y="632.7" width="121.2" height="103.5" fill="none" stroke="#e6e6e6" stroke-width="1.4"/>
<text x="1547.0" y="750.7" font-size="11.6" fill="#ececec" text-anchor="middle" font-weight="bold">80</text>
<rect x="1628.90" y="632.70" width="121.20" height="103.50" fill="#e6e6e6"/>
<rect x="1628.90" y="632.70" width="121.20" height="52.30" fill="#e2e6e7" shape-rendering="crispEdges"/>
<rect x="1628.9" y="632.7" width="121.2" height="103.5" fill="none" stroke="#e6e6e6" stroke-width="1.4"/>
<text x="1689.5" y="750.7" font-size="11.6" fill="#ececec" text-anchor="middle" font-weight="bold">90</text>
<rect x="1771.40" y="632.70" width="121.20" height="103.50" fill="#ffffff"/>
<rect x="1771.40" y="632.70" width="121.20" height="52.30" fill="#fafeff" shape-rendering="crispEdges"/>
<rect x="1771.4" y="632.7" width="121.2" height="103.5" fill="none" stroke="#e6e6e6" stroke-width="1.4"/>
<text x="1832.0" y="750.7" font-size="11.6" fill="#ececec" text-anchor="middle" font-weight="bold">100</text>
<text transform="translate(336.8,672.8) rotate(-90)" font-size="13.4" font-weight="bold" fill="#ececec" textLength="35.4" lengthAdjust="spacingAndGlyphs">Actual</text>
<text transform="translate(336.8,731.2) rotate(-90)" font-size="13.4" font-weight="bold" fill="#ececec" textLength="35.1" lengthAdjust="spacingAndGlyphs">Target</text>
<text x="247.7" y="826.7" font-size="28" fill="#f0f0f0" textLength="221.6" lengthAdjust="spacingAndGlyphs">Current Reading</text>
<text x="247.7" y="870.0" font-size="25" fill="#f0f0f0" textLength="103.3" lengthAdjust="spacingAndGlyphs">x: 0.3095</text>
<text x="399.3" y="870.0" font-size="25" fill="#f0f0f0" textLength="104.4" lengthAdjust="spacingAndGlyphs">y: 0.3276</text>
<text x="247.7" y="905.0" font-size="25" fill="#f0f0f0" textLength="111.6" lengthAdjust="spacingAndGlyphs">u': 0.1961</text>
<text x="399.3" y="905.0" font-size="25" fill="#f0f0f0" textLength="110.0" lengthAdjust="spacingAndGlyphs">v': 0.4671</text>
<text x="247.7" y="940.0" font-size="25" fill="#f0f0f0" textLength="189.3" lengthAdjust="spacingAndGlyphs">cd/m²: 316.5292</text>
<text x="247.7" y="973.5" font-size="25" fill="#f0f0f0" textLength="156.3" lengthAdjust="spacingAndGlyphs">ΔE 2000: 1.86</text>
<text x="706.3" y="792.7" font-size="14.6" fill="#d6d6d6" textLength="76.0" lengthAdjust="spacingAndGlyphs" text-anchor="middle">CIE 1931 xy</text>
<path d="M607.7 966V971" stroke="#9a9a9a" stroke-width="1.3"/>
<text x="607.7" y="988.3" font-size="14.5" fill="#d6d6d6" text-anchor="middle">0.29</text>
<path d="M658.3 966V971" stroke="#9a9a9a" stroke-width="1.3"/>
<text x="658.3" y="988.3" font-size="14.5" fill="#d6d6d6" text-anchor="middle">0.3</text>
<path d="M709.3 966V971" stroke="#9a9a9a" stroke-width="1.3"/>
<text x="709.3" y="988.3" font-size="14.5" fill="#d6d6d6" text-anchor="middle">0.31</text>
<path d="M760.7 966V971" stroke="#9a9a9a" stroke-width="1.3"/>
<text x="760.7" y="988.3" font-size="14.5" fill="#d6d6d6" text-anchor="middle">0.32</text>
<path d="M811.7 966V971" stroke="#9a9a9a" stroke-width="1.3"/>
<text x="811.7" y="988.3" font-size="14.5" fill="#d6d6d6" text-anchor="middle">0.33</text>
<path d="M590.5 847.3H596" stroke="#9a9a9a" stroke-width="1.3"/>
<text x="590.3" y="852.5" font-size="14.5" fill="#d6d6d6" text-anchor="end">0.34</text>
<path d="M590.5 914.3H596" stroke="#9a9a9a" stroke-width="1.3"/>
<text x="590.3" y="919.5" font-size="14.5" fill="#d6d6d6" text-anchor="end">0.32</text>
<rect x="862.40" y="768.60" width="866.10" height="25.70" fill="url(#gHdr)"/>
<text x="1023.5" y="787.0" font-size="13" fill="#e4e4e4" text-anchor="middle">0</text>
<text x="1093.7" y="787.0" font-size="13" fill="#e4e4e4" text-anchor="middle">10</text>
<text x="1160.5" y="787.0" font-size="13" fill="#e4e4e4" text-anchor="middle">20</text>
<text x="1227.5" y="787.0" font-size="13" fill="#e4e4e4" text-anchor="middle">30</text>
<text x="1294.3" y="787.0" font-size="13" fill="#e4e4e4" text-anchor="middle">40</text>
<text x="1360.7" y="787.0" font-size="13" fill="#e4e4e4" text-anchor="middle">50</text>
<text x="1427.4" y="787.0" font-size="13" fill="#e4e4e4" text-anchor="middle">60</text>
<text x="1494.4" y="787.0" font-size="13" fill="#e4e4e4" text-anchor="middle">70</text>
<text x="1560.7" y="787.0" font-size="13" fill="#e4e4e4" text-anchor="middle">80</text>
<text x="1627.7" y="787.0" font-size="13" fill="#e4e4e4" text-anchor="middle">90</text>
<text x="1694.4" y="787.0" font-size="13" fill="#e4e4e4" text-anchor="middle">100</text>
<rect x="862.40" y="794.30" width="866.10" height="23.50" fill="#424242"/>
<text x="873.0" y="811.1" font-size="13" fill="#f4f4f4" textLength="48.7" lengthAdjust="spacingAndGlyphs" font-weight="bold">x: CIE31</text>
<text x="990.1" y="811.1" font-size="13" fill="#f2f2f2" textLength="38.9" lengthAdjust="spacingAndGlyphs">0.2397</text>
<text x="1063.6" y="811.1" font-size="13" fill="#f2f2f2" textLength="38.9" lengthAdjust="spacingAndGlyphs">0.3091</text>
<text x="1130.8" y="811.1" font-size="13" fill="#f2f2f2" textLength="38.9" lengthAdjust="spacingAndGlyphs">0.3107</text>
<text x="1197.3" y="811.1" font-size="13" fill="#f2f2f2" textLength="38.9" lengthAdjust="spacingAndGlyphs">0.3084</text>
<text x="1264.1" y="811.1" font-size="13" fill="#f2f2f2" textLength="38.9" lengthAdjust="spacingAndGlyphs">0.3103</text>
<text x="1330.6" y="811.1" font-size="13" fill="#f2f2f2" textLength="38.9" lengthAdjust="spacingAndGlyphs">0.3097</text>
<text x="1397.3" y="811.1" font-size="13" fill="#f2f2f2" textLength="38.9" lengthAdjust="spacingAndGlyphs">0.3092</text>
<text x="1464.3" y="811.1" font-size="13" fill="#f2f2f2" textLength="38.9" lengthAdjust="spacingAndGlyphs">0.3090</text>
<text x="1531.0" y="811.1" font-size="13" fill="#f2f2f2" textLength="38.9" lengthAdjust="spacingAndGlyphs">0.3096</text>
<text x="1597.8" y="811.1" font-size="13" fill="#f2f2f2" textLength="38.9" lengthAdjust="spacingAndGlyphs">0.3096</text>
<text x="1664.3" y="811.1" font-size="13" fill="#f2f2f2" textLength="38.9" lengthAdjust="spacingAndGlyphs">0.3095</text>
<rect x="862.40" y="817.80" width="866.10" height="23.80" fill="#808080"/>
<text x="873.0" y="834.6" font-size="13" fill="#f4f4f4" textLength="48.2" lengthAdjust="spacingAndGlyphs" font-weight="bold">y: CIE31</text>
<text x="990.1" y="834.6" font-size="13" fill="#f2f2f2" textLength="38.9" lengthAdjust="spacingAndGlyphs">0.2616</text>
<text x="1063.6" y="834.6" font-size="13" fill="#f2f2f2" textLength="38.9" lengthAdjust="spacingAndGlyphs">0.3238</text>
<text x="1130.8" y="834.6" font-size="13" fill="#f2f2f2" textLength="38.9" lengthAdjust="spacingAndGlyphs">0.3265</text>
<text x="1197.3" y="834.6" font-size="13" fill="#f2f2f2" textLength="38.9" lengthAdjust="spacingAndGlyphs">0.3274</text>
<text x="1264.1" y="834.6" font-size="13" fill="#f2f2f2" textLength="38.9" lengthAdjust="spacingAndGlyphs">0.3275</text>
<text x="1330.6" y="834.6" font-size="13" fill="#f2f2f2" textLength="38.9" lengthAdjust="spacingAndGlyphs">0.3290</text>
<text x="1397.3" y="834.6" font-size="13" fill="#f2f2f2" textLength="38.9" lengthAdjust="spacingAndGlyphs">0.3279</text>
<text x="1464.3" y="834.6" font-size="13" fill="#f2f2f2" textLength="38.9" lengthAdjust="spacingAndGlyphs">0.3271</text>
<text x="1531.0" y="834.6" font-size="13" fill="#f2f2f2" textLength="38.9" lengthAdjust="spacingAndGlyphs">0.3275</text>
<text x="1597.8" y="834.6" font-size="13" fill="#f2f2f2" textLength="38.9" lengthAdjust="spacingAndGlyphs">0.3280</text>
<text x="1664.3" y="834.6" font-size="13" fill="#f2f2f2" textLength="38.9" lengthAdjust="spacingAndGlyphs">0.3276</text>
<rect x="862.40" y="841.60" width="866.10" height="23.90" fill="#424242"/>
<text x="873.0" y="858.4" font-size="13" fill="#f4f4f4" textLength="7.5" lengthAdjust="spacingAndGlyphs" font-weight="bold">Y</text>
<text x="990.1" y="858.4" font-size="13" fill="#f2f2f2" textLength="38.9" lengthAdjust="spacingAndGlyphs">0.1553</text>
<text x="1063.6" y="858.4" font-size="13" fill="#f2f2f2" textLength="38.9" lengthAdjust="spacingAndGlyphs">3.4172</text>
<text x="1130.8" y="858.4" font-size="13" fill="#f2f2f2" textLength="46.2" lengthAdjust="spacingAndGlyphs">10.6475</text>
<text x="1197.3" y="858.4" font-size="13" fill="#f2f2f2" textLength="46.2" lengthAdjust="spacingAndGlyphs">23.1444</text>
<text x="1264.1" y="858.4" font-size="13" fill="#f2f2f2" textLength="46.2" lengthAdjust="spacingAndGlyphs">42.4984</text>
<text x="1330.6" y="858.4" font-size="13" fill="#f2f2f2" textLength="46.2" lengthAdjust="spacingAndGlyphs">68.4117</text>
<text x="1397.3" y="858.4" font-size="13" fill="#f2f2f2" textLength="53.5" lengthAdjust="spacingAndGlyphs">100.7722</text>
<text x="1464.3" y="858.4" font-size="13" fill="#f2f2f2" textLength="53.5" lengthAdjust="spacingAndGlyphs">141.6082</text>
<text x="1531.0" y="858.4" font-size="13" fill="#f2f2f2" textLength="53.5" lengthAdjust="spacingAndGlyphs">191.8528</text>
<text x="1597.8" y="858.4" font-size="13" fill="#f2f2f2" textLength="53.5" lengthAdjust="spacingAndGlyphs">249.8544</text>
<text x="1664.3" y="858.4" font-size="13" fill="#f2f2f2" textLength="53.5" lengthAdjust="spacingAndGlyphs">316.5292</text>
<rect x="862.40" y="865.50" width="866.10" height="23.60" fill="#808080"/>
<text x="873.0" y="882.3" font-size="13" fill="#f4f4f4" textLength="51.0" lengthAdjust="spacingAndGlyphs" font-weight="bold">Target Y</text>
<text x="990.1" y="882.3" font-size="13" fill="#f2f2f2" textLength="38.9" lengthAdjust="spacingAndGlyphs">0.0000</text>
<text x="1063.6" y="882.3" font-size="13" fill="#f2f2f2" textLength="38.9" lengthAdjust="spacingAndGlyphs">3.2697</text>
<text x="1130.8" y="882.3" font-size="13" fill="#f2f2f2" textLength="46.2" lengthAdjust="spacingAndGlyphs">10.4786</text>
<text x="1197.3" y="882.3" font-size="13" fill="#f2f2f2" textLength="46.2" lengthAdjust="spacingAndGlyphs">22.8761</text>
<text x="1264.1" y="882.3" font-size="13" fill="#f2f2f2" textLength="46.2" lengthAdjust="spacingAndGlyphs">42.0567</text>
<text x="1330.6" y="882.3" font-size="13" fill="#f2f2f2" textLength="46.2" lengthAdjust="spacingAndGlyphs">68.3261</text>
<text x="1397.3" y="882.3" font-size="13" fill="#f2f2f2" textLength="53.5" lengthAdjust="spacingAndGlyphs">100.8293</text>
<text x="1464.3" y="882.3" font-size="13" fill="#f2f2f2" textLength="53.5" lengthAdjust="spacingAndGlyphs">140.9192</text>
<text x="1531.0" y="882.3" font-size="13" fill="#f2f2f2" textLength="53.5" lengthAdjust="spacingAndGlyphs">191.1290</text>
<text x="1597.8" y="882.3" font-size="13" fill="#f2f2f2" textLength="53.5" lengthAdjust="spacingAndGlyphs">250.4689</text>
<text x="1664.3" y="882.3" font-size="13" fill="#f2f2f2" textLength="53.5" lengthAdjust="spacingAndGlyphs">316.5292</text>
<rect x="862.40" y="889.10" width="866.10" height="23.40" fill="#424242"/>
<text x="873.0" y="905.9" font-size="13" fill="#f4f4f4" textLength="103.5" lengthAdjust="spacingAndGlyphs" font-weight="bold">Gamma Log/Log</text>
<text x="990.1" y="905.9" font-size="13" fill="#f2f2f2" textLength="38.9" lengthAdjust="spacingAndGlyphs">1.2778</text>
<text x="1063.6" y="905.9" font-size="13" fill="#f2f2f2" textLength="38.9" lengthAdjust="spacingAndGlyphs">1.9835</text>
<text x="1130.8" y="905.9" font-size="13" fill="#f2f2f2" textLength="38.9" lengthAdjust="spacingAndGlyphs">2.1076</text>
<text x="1197.3" y="905.9" font-size="13" fill="#f2f2f2" textLength="38.9" lengthAdjust="spacingAndGlyphs">2.1608</text>
<text x="1264.1" y="905.9" font-size="13" fill="#f2f2f2" textLength="38.9" lengthAdjust="spacingAndGlyphs">2.1914</text>
<text x="1330.6" y="905.9" font-size="13" fill="#f2f2f2" textLength="38.9" lengthAdjust="spacingAndGlyphs">2.2226</text>
<text x="1397.3" y="905.9" font-size="13" fill="#f2f2f2" textLength="38.9" lengthAdjust="spacingAndGlyphs">2.2406</text>
<text x="1464.3" y="905.9" font-size="13" fill="#f2f2f2" textLength="38.9" lengthAdjust="spacingAndGlyphs">2.2375</text>
<text x="1531.0" y="905.9" font-size="13" fill="#f2f2f2" textLength="38.9" lengthAdjust="spacingAndGlyphs">2.2438</text>
<text x="1597.8" y="905.9" font-size="13" fill="#f2f2f2" textLength="38.9" lengthAdjust="spacingAndGlyphs">2.2924</text>
<text x="1664.3" y="905.9" font-size="13" fill="#f2f2f2" textLength="38.9" lengthAdjust="spacingAndGlyphs">2.2749</text>
<rect x="862.40" y="912.50" width="866.10" height="23.60" fill="#808080"/>
<text x="873.0" y="929.3" font-size="13" fill="#f4f4f4" textLength="23.6" lengthAdjust="spacingAndGlyphs" font-weight="bold">CCT</text>
<text x="990.1" y="929.3" font-size="13" fill="#f2f2f2" textLength="68.1" lengthAdjust="spacingAndGlyphs">19956.0000</text>
<text x="1063.6" y="929.3" font-size="13" fill="#f2f2f2" textLength="60.8" lengthAdjust="spacingAndGlyphs">6752.0000</text>
<text x="1130.8" y="929.3" font-size="13" fill="#f2f2f2" textLength="60.8" lengthAdjust="spacingAndGlyphs">6634.0000</text>
<text x="1197.3" y="929.3" font-size="13" fill="#f2f2f2" textLength="60.8" lengthAdjust="spacingAndGlyphs">6755.0000</text>
<text x="1264.1" y="929.3" font-size="13" fill="#f2f2f2" textLength="60.8" lengthAdjust="spacingAndGlyphs">6651.0000</text>
<text x="1330.6" y="929.3" font-size="13" fill="#f2f2f2" textLength="60.8" lengthAdjust="spacingAndGlyphs">6672.0000</text>
<text x="1397.3" y="929.3" font-size="13" fill="#f2f2f2" textLength="60.8" lengthAdjust="spacingAndGlyphs">6708.0000</text>
<text x="1464.3" y="929.3" font-size="13" fill="#f2f2f2" textLength="60.8" lengthAdjust="spacingAndGlyphs">6726.0000</text>
<text x="1531.0" y="929.3" font-size="13" fill="#f2f2f2" textLength="60.8" lengthAdjust="spacingAndGlyphs">6690.0000</text>
<text x="1597.8" y="929.3" font-size="13" fill="#f2f2f2" textLength="60.8" lengthAdjust="spacingAndGlyphs">6686.0000</text>
<text x="1664.3" y="929.3" font-size="13" fill="#f2f2f2" textLength="60.8" lengthAdjust="spacingAndGlyphs">6696.0000</text>
<rect x="862.40" y="936.10" width="866.10" height="23.50" fill="#424242"/>
<text x="873.0" y="952.9" font-size="13" fill="#f4f4f4" textLength="50.5" lengthAdjust="spacingAndGlyphs" font-weight="bold">ΔE 2000</text>
<text x="990.1" y="952.9" font-size="13" fill="#f2f2f2" textLength="38.9" lengthAdjust="spacingAndGlyphs">0.6285</text>
<text x="1063.6" y="952.9" font-size="13" fill="#f2f2f2" textLength="38.9" lengthAdjust="spacingAndGlyphs">0.6739</text>
<text x="1130.8" y="952.9" font-size="13" fill="#f2f2f2" textLength="38.9" lengthAdjust="spacingAndGlyphs">0.4577</text>
<text x="1197.3" y="952.9" font-size="13" fill="#f2f2f2" textLength="38.9" lengthAdjust="spacingAndGlyphs">1.0848</text>
<text x="1264.1" y="952.9" font-size="13" fill="#f2f2f2" textLength="38.9" lengthAdjust="spacingAndGlyphs">0.6910</text>
<text x="1330.6" y="952.9" font-size="13" fill="#f2f2f2" textLength="38.9" lengthAdjust="spacingAndGlyphs">1.4381</text>
<text x="1397.3" y="952.9" font-size="13" fill="#f2f2f2" textLength="38.9" lengthAdjust="spacingAndGlyphs">1.5107</text>
<text x="1464.3" y="952.9" font-size="13" fill="#f2f2f2" textLength="38.9" lengthAdjust="spacingAndGlyphs">1.5483</text>
<text x="1531.0" y="952.9" font-size="13" fill="#f2f2f2" textLength="38.9" lengthAdjust="spacingAndGlyphs">1.4798</text>
<text x="1597.8" y="952.9" font-size="13" fill="#f2f2f2" textLength="38.9" lengthAdjust="spacingAndGlyphs">1.8079</text>
<text x="1664.3" y="952.9" font-size="13" fill="#f2f2f2" textLength="38.9" lengthAdjust="spacingAndGlyphs">1.8622</text>
<rect x="862.40" y="959.60" width="866.10" height="23.60" fill="#808080"/>
<text x="873.0" y="976.4" font-size="13" fill="#f4f4f4" textLength="40.5" lengthAdjust="spacingAndGlyphs" font-weight="bold">ΔE ITP</text>
<text x="990.1" y="976.4" font-size="13" fill="#f2f2f2" textLength="46.2" lengthAdjust="spacingAndGlyphs">55.9254</text>
<text x="1063.6" y="976.4" font-size="13" fill="#f2f2f2" textLength="38.9" lengthAdjust="spacingAndGlyphs">2.6307</text>
<text x="1130.8" y="976.4" font-size="13" fill="#f2f2f2" textLength="38.9" lengthAdjust="spacingAndGlyphs">1.3394</text>
<rect x="1193.90" y="959.60" width="67.10" height="23.60" fill="#f0f0f0"/>
<text x="1197.3" y="976.4" font-size="13" fill="#222" textLength="38.9" lengthAdjust="spacingAndGlyphs">2.3094</text>
<text x="1264.1" y="976.4" font-size="13" fill="#f2f2f2" textLength="38.9" lengthAdjust="spacingAndGlyphs">1.4642</text>
<text x="1330.6" y="976.4" font-size="13" fill="#f2f2f2" textLength="38.9" lengthAdjust="spacingAndGlyphs">1.9267</text>
<text x="1397.3" y="976.4" font-size="13" fill="#f2f2f2" textLength="38.9" lengthAdjust="spacingAndGlyphs">2.1059</text>
<text x="1464.3" y="976.4" font-size="13" fill="#f2f2f2" textLength="38.9" lengthAdjust="spacingAndGlyphs">2.1943</text>
<text x="1531.0" y="976.4" font-size="13" fill="#f2f2f2" textLength="38.9" lengthAdjust="spacingAndGlyphs">1.8926</text>
<text x="1597.8" y="976.4" font-size="13" fill="#f2f2f2" textLength="38.9" lengthAdjust="spacingAndGlyphs">1.9858</text>
<text x="1664.3" y="976.4" font-size="13" fill="#f2f2f2" textLength="38.9" lengthAdjust="spacingAndGlyphs">2.0056</text>
<rect x="861.6" y="767.8000000000001" width="867.7" height="216.2" fill="none" stroke="#060606" stroke-width="1.4"/>
<rect x="225.00" y="1143.00" width="1692.00" height="3.00" fill="#2a2a2a"/>
<rect x="226.3" y="1076.4" width="118.5" height="68.2" rx="4.3" fill="url(#gBb)" stroke="#a6a6a6" stroke-width="1"/>
<rect x="231.8" y="1081.6" width="107.4" height="40.7" rx="4" fill="#000000" stroke="#444" stroke-opacity="0.5" stroke-width="1.2"/>
<text x="285.6" y="1139.7" font-size="10.5" fill="#303030" text-anchor="middle" font-weight="bold">0</text>
<rect x="347.1" y="1076.4" width="118.5" height="68.2" rx="4.3" fill="url(#gBb)" stroke="#a6a6a6" stroke-width="1"/>
<rect x="352.6" y="1081.6" width="107.4" height="40.7" rx="4" fill="#1c1c1c" stroke="#444" stroke-opacity="0.5" stroke-width="1.2"/>
<text x="406.4" y="1139.7" font-size="10.5" fill="#303030" text-anchor="middle" font-weight="bold">10</text>
<rect x="468.0" y="1076.4" width="118.5" height="68.2" rx="4.3" fill="url(#gBb)" stroke="#a6a6a6" stroke-width="1"/>
<rect x="473.5" y="1081.6" width="107.4" height="40.7" rx="4" fill="#333333" stroke="#444" stroke-opacity="0.5" stroke-width="1.2"/>
<text x="527.2" y="1139.7" font-size="10.5" fill="#303030" text-anchor="middle" font-weight="bold">20</text>
<rect x="588.8" y="1076.4" width="118.5" height="68.2" rx="4.3" fill="url(#gBb)" stroke="#a6a6a6" stroke-width="1"/>
<rect x="594.3" y="1081.6" width="107.4" height="40.7" rx="4" fill="#4d4d4d" stroke="#444" stroke-opacity="0.5" stroke-width="1.2"/>
<text x="648.0" y="1139.7" font-size="10.5" fill="#303030" text-anchor="middle" font-weight="bold">30</text>
<rect x="709.6" y="1076.4" width="118.5" height="68.2" rx="4.3" fill="url(#gBb)" stroke="#a6a6a6" stroke-width="1"/>
<rect x="715.1" y="1081.6" width="107.4" height="40.7" rx="4" fill="#666666" stroke="#444" stroke-opacity="0.5" stroke-width="1.2"/>
<text x="768.9" y="1139.7" font-size="10.5" fill="#303030" text-anchor="middle" font-weight="bold">40</text>
<rect x="830.5" y="1076.4" width="118.5" height="68.2" rx="4.3" fill="url(#gBb)" stroke="#a6a6a6" stroke-width="1"/>
<rect x="836.0" y="1081.6" width="107.4" height="40.7" rx="4" fill="#808080" stroke="#444" stroke-opacity="0.5" stroke-width="1.2"/>
<text x="889.7" y="1139.7" font-size="10.5" fill="#303030" text-anchor="middle" font-weight="bold">50</text>
<rect x="951.3" y="1076.4" width="118.5" height="68.2" rx="4.3" fill="url(#gBb)" stroke="#a6a6a6" stroke-width="1"/>
<rect x="956.8" y="1081.6" width="107.4" height="40.7" rx="4" fill="#999999" stroke="#444" stroke-opacity="0.5" stroke-width="1.2"/>
<text x="1010.5" y="1139.7" font-size="10.5" fill="#303030" text-anchor="middle" font-weight="bold">60</text>
<rect x="1072.1" y="1076.4" width="118.5" height="68.2" rx="4.3" fill="url(#gBb)" stroke="#a6a6a6" stroke-width="1"/>
<rect x="1077.6" y="1081.6" width="107.4" height="40.7" rx="4" fill="#b3b3b3" stroke="#444" stroke-opacity="0.5" stroke-width="1.2"/>
<text x="1131.4" y="1139.7" font-size="10.5" fill="#303030" text-anchor="middle" font-weight="bold">70</text>
<rect x="1192.9" y="1076.4" width="118.5" height="68.2" rx="4.3" fill="url(#gBb)" stroke="#a6a6a6" stroke-width="1"/>
<rect x="1198.4" y="1081.6" width="107.4" height="40.7" rx="4" fill="#cccccc" stroke="#444" stroke-opacity="0.5" stroke-width="1.2"/>
<text x="1252.2" y="1139.7" font-size="10.5" fill="#303030" text-anchor="middle" font-weight="bold">80</text>
<rect x="1313.8" y="1076.4" width="118.5" height="68.2" rx="4.3" fill="url(#gBb)" stroke="#a6a6a6" stroke-width="1"/>
<rect x="1319.3" y="1081.6" width="107.4" height="40.7" rx="4" fill="#e6e6e6" stroke="#444" stroke-opacity="0.5" stroke-width="1.2"/>
<text x="1373.0" y="1139.7" font-size="10.5" fill="#303030" text-anchor="middle" font-weight="bold">90</text>
<rect x="1434.6" y="1076.4" width="118.5" height="68.2" rx="4.3" fill="url(#gBbSel)" stroke="#3a3a3a" stroke-width="1"/>
<rect x="1440.1" y="1081.6" width="107.4" height="40.7" rx="4" fill="#ffffff" stroke="#444" stroke-opacity="0.5" stroke-width="1.2"/>
<text x="1493.8" y="1139.7" font-size="10.5" fill="#ffffff" text-anchor="middle" font-weight="bold">100</text>
<path d="M1556.7 1096.8V1080.5Q1556.7 1076.4 1560.9 1076.4H1606.3Q1610.5 1076.4 1610.5 1080.5V1096.8Z" fill="url(#gSm)" stroke="#a8a8a8" stroke-width="0.8"/>
<circle cx="1583.5" cy="1086.8" r="8.5" fill="url(#gCirc)"/>
<path d="M1578.4 1088.6H1588.6L1583.5 1083.8Z" fill="#2e2e2e"/>
<path d="M1556.7 1097.8H1610.5V1140.4Q1610.5 1144.5 1606.3 1144.5H1560.9Q1556.7 1144.5 1556.7 1140.4Z" fill="url(#gSm2)" stroke="#9a9a9a" stroke-width="0.8"/>
<rect x="1567.2" y="1104.4" width="32.4" height="32.6" rx="4" fill="url(#gStop)" stroke="#262626" stroke-width="2.4"/>
<rect x="1575.90" y="1113.60" width="15.30" height="15.30" fill="#000"/>
<rect x="1575.90" y="1113.60" width="15.30" height="7.00" fill="#222"/>
<path d="M1612.3 1110.2V1081Q1612.3 1077 1616.3 1077H1913.3Q1917.3 1077 1917.3 1081V1110.2Z" fill="url(#gRb)"/>
<path d="M1612.8 1110V1081Q1612.8 1077.5 1616.3 1077.5H1913.3Q1916.8 1077.5 1916.8 1081" fill="none" stroke="#b0b0b0" stroke-width="0.9"/>
<circle cx="1638.2" cy="1092.3" r="10.5" fill="url(#gCirc)"/>
<circle cx="1689.6" cy="1092.3" r="10.5" fill="url(#gCirc)"/>
<circle cx="1740.2" cy="1092.3" r="10.5" fill="url(#gCirc)"/>
<circle cx="1790.6" cy="1092.3" r="10.5" fill="url(#gCirc)"/>
<circle cx="1841.1" cy="1092.3" r="10.5" fill="url(#gCirc)"/>
<circle cx="1891.9" cy="1092.3" r="10.5" fill="url(#gCirc)"/>
<path d="M1664.2 1077.5V1110" stroke="#2c2c2c" stroke-width="1"/><path d="M1665.2 1078V1110" stroke="#a0a0a0" stroke-opacity="0.5" stroke-width="0.8"/>
<path d="M1715 1077.5V1110" stroke="#2c2c2c" stroke-width="1"/><path d="M1716 1078V1110" stroke="#a0a0a0" stroke-opacity="0.5" stroke-width="0.8"/>
<path d="M1765.4 1077.5V1110" stroke="#2c2c2c" stroke-width="1"/><path d="M1766.4 1078V1110" stroke="#a0a0a0" stroke-opacity="0.5" stroke-width="0.8"/>
<path d="M1815.7 1077.5V1110" stroke="#2c2c2c" stroke-width="1"/><path d="M1816.7 1078V1110" stroke="#a0a0a0" stroke-opacity="0.5" stroke-width="0.8"/>
<path d="M1866.5 1077.5V1110" stroke="#2c2c2c" stroke-width="1"/><path d="M1867.5 1078V1110" stroke="#a0a0a0" stroke-opacity="0.5" stroke-width="0.8"/>
<rect x="1612.30" y="1110.20" width="305.00" height="1.20" fill="#3a3a3a"/>
<path d="M1612.3 1147V1115.4Q1612.3 1111.4 1616.3 1111.4H1761.2Q1765.2 1111.4 1765.2 1115.4V1147Z" fill="url(#gRb2)" stroke="#b4b4b4" stroke-width="0.8"/>
<path d="M1765.2 1147V1115.4Q1765.2 1111.4 1769.2 1111.4H1913.3Q1917.3 1111.4 1917.3 1115.4V1147Z" fill="url(#gRb2)" stroke="#b4b4b4" stroke-width="0.8"/>
<path d="M1765.2 1112V1146" stroke="#3a3a3a" stroke-width="1"/>
<circle cx="1647" cy="1128.4" r="10.5" fill="url(#gCirc)"/>
<circle cx="1886.6" cy="1128.4" r="10.5" fill="url(#gCirc)"/>
<path d="M1649.5 1123.5L1644.5 1128.4L1649.5 1133.3" fill="none" stroke="#333" stroke-width="1.6"/>
<path d="M1882.6 1123.8L1886.8 1128.4L1882.6 1133M1887.4 1123.8L1891.6 1128.4L1887.4 1133" fill="none" stroke="#3a3a3a" stroke-width="1.5"/>
<text x="1676.6" y="1136.3" font-size="22" fill="#2c2c2c" textLength="56.5" lengthAdjust="spacingAndGlyphs">Back</text>
<text x="1797.4" y="1136.3" font-size="22" fill="#2c2c2c" textLength="57.5" lengthAdjust="spacingAndGlyphs">Next</text>
<path d="M1686 1087.5V1097.5L1694 1092.5Z" fill="#2e2e2e"/>
<rect x="1634.5" y="1088.5" width="6.5" height="7.5" fill="#2e2e2e"/>
<text x="1740.0" y="1096.5" font-size="10" fill="#2e2e2e" text-anchor="middle" font-weight="bold">[··]</text>
<text x="1790.5" y="1097.5" font-size="15" fill="#2e2e2e" text-anchor="middle" font-weight="bold">∞</text>
<path d="M1836.8 1094A5 5 0 0 1 1844 1088.6" fill="none" stroke="#2e2e2e" stroke-width="1.8"/><path d="M1842.5 1085L1847.5 1088.8L1842 1091.8Z" fill="#2e2e2e"/>
<rect x="0.00" y="1144.60" width="1920.00" height="1.40" fill="#222222" opacity="0.85"/>
<g opacity="0.8"><path d="M1631 1084.5L1669.5 1092.8L1670.8 1115.2L1641 1117.2M1631 1084.5L1633.8 1119.3L1656.7 1134.3L1696.5 1120.2L1675 1116.2" fill="none" stroke="#f4f4f4" stroke-width="5" stroke-linejoin="round" stroke-linecap="round" filter="url(#fGlow)" opacity="0.8"/><path d="M1631 1084.5L1669.5 1092.8L1670.8 1115.2L1641 1117.2M1631 1084.5L1633.8 1119.3L1656.7 1134.3L1696.5 1120.2L1675 1116.2" fill="none" stroke="#93242e" stroke-width="2.7" stroke-linejoin="round" stroke-linecap="round"/><path d="M1642.5 1096.8Q1648 1097 1653.3 1110.5Q1660 1095 1674.5 1083.5Q1662 1099 1654.5 1113.8L1651.3 1113.8Q1648 1102 1642.5 1096.8Z" fill="#f4f4f4" stroke="#f4f4f4" stroke-width="2.6" stroke-linejoin="round" filter="url(#fGlow)"/><path d="M1642.5 1096.8Q1648 1097 1653.3 1110.5Q1660 1095 1674.5 1083.5Q1662 1099 1654.5 1113.8L1651.3 1113.8Q1648 1102 1642.5 1096.8Z" fill="#383838" stroke="#383838" stroke-width="0.8" stroke-linejoin="round"/></g>
<text x="1675.6" y="1112.7" font-size="25.2" font-weight="bold" textLength="148.3" lengthAdjust="spacingAndGlyphs" fill="none" stroke="#f6f6f6" stroke-width="3.6" stroke-linejoin="round" opacity="0.62" filter="url(#fGlow)">NOTEBOOK</text>
<text x="1675.6" y="1112.7" font-size="25.2" font-weight="bold" textLength="148.3" lengthAdjust="spacingAndGlyphs" fill="#93242e" stroke="#93242e" stroke-width="1.1" stroke-linejoin="round" opacity="0.8">NOTEBOOK</text>
<text x="1824.9" y="1112.7" font-size="25.2" textLength="86.5" lengthAdjust="spacingAndGlyphs" fill="none" stroke="#f6f6f6" stroke-width="3.4" stroke-linejoin="round" opacity="0.62" filter="url(#fGlow)">CHECK</text>
<text x="1824.9" y="1112.7" font-size="25.2" textLength="86.5" lengthAdjust="spacingAndGlyphs" fill="#303030" stroke="#303030" stroke-width="0.7" stroke-linejoin="round" opacity="0.8">CHECK</text></svg>
<div id="cie"></div>
<svg width="1920" height="1146" viewBox="0 0 1920 1146" font-family="'Liberation Sans', sans-serif" style="position:absolute;left:0;top:0;pointer-events:none">
<clipPath id="cpC"><rect x="596" y="797.8" width="255.9" height="168.2"/></clipPath>
<path d="M620.6 971L860 820.6" stroke="#000" stroke-width="3.2" clip-path="url(#cpC)"/>
<rect x="596" y="797.8" width="255.9" height="168.2" fill="none" stroke="#8c8c8c" stroke-width="1.4"/>
<circle cx="700" cy="887" r="3.9" fill="#555" stroke="#1c1c1c" stroke-width="1.2"/>
<circle cx="712.6" cy="889.3" r="3.9" fill="#333" stroke="#1c1c1c" stroke-width="1.2"/>
<circle cx="702.3" cy="888.3" r="3.9" fill="#777" stroke="#1c1c1c" stroke-width="1.2"/>
<circle cx="710.5" cy="886.5" r="3.9" fill="#4a4a4a" stroke="#1c1c1c" stroke-width="1.2"/>
<circle cx="708.2" cy="880.6" r="4.1" fill="#888" stroke="#1c1c1c" stroke-width="1.2"/>
<circle cx="704.3" cy="887.8" r="3.6" fill="#bbb" stroke="#1c1c1c" stroke-width="1.2"/>
<circle cx="709.6" cy="884.5" r="3.6" fill="#999" stroke="#1c1c1c" stroke-width="1.2"/>
<circle cx="707.2" cy="887" r="3.3" fill="#ffffff" stroke="#1c1c1c" stroke-width="1.2"/>
<circle cx="705.3" cy="899" r="4.5" fill="#141414"/>
<rect x="716.8" y="874.7" width="13.6" height="13.2" fill="#fff" stroke="#000" stroke-width="1.4"/>
</svg>
</body></html>
